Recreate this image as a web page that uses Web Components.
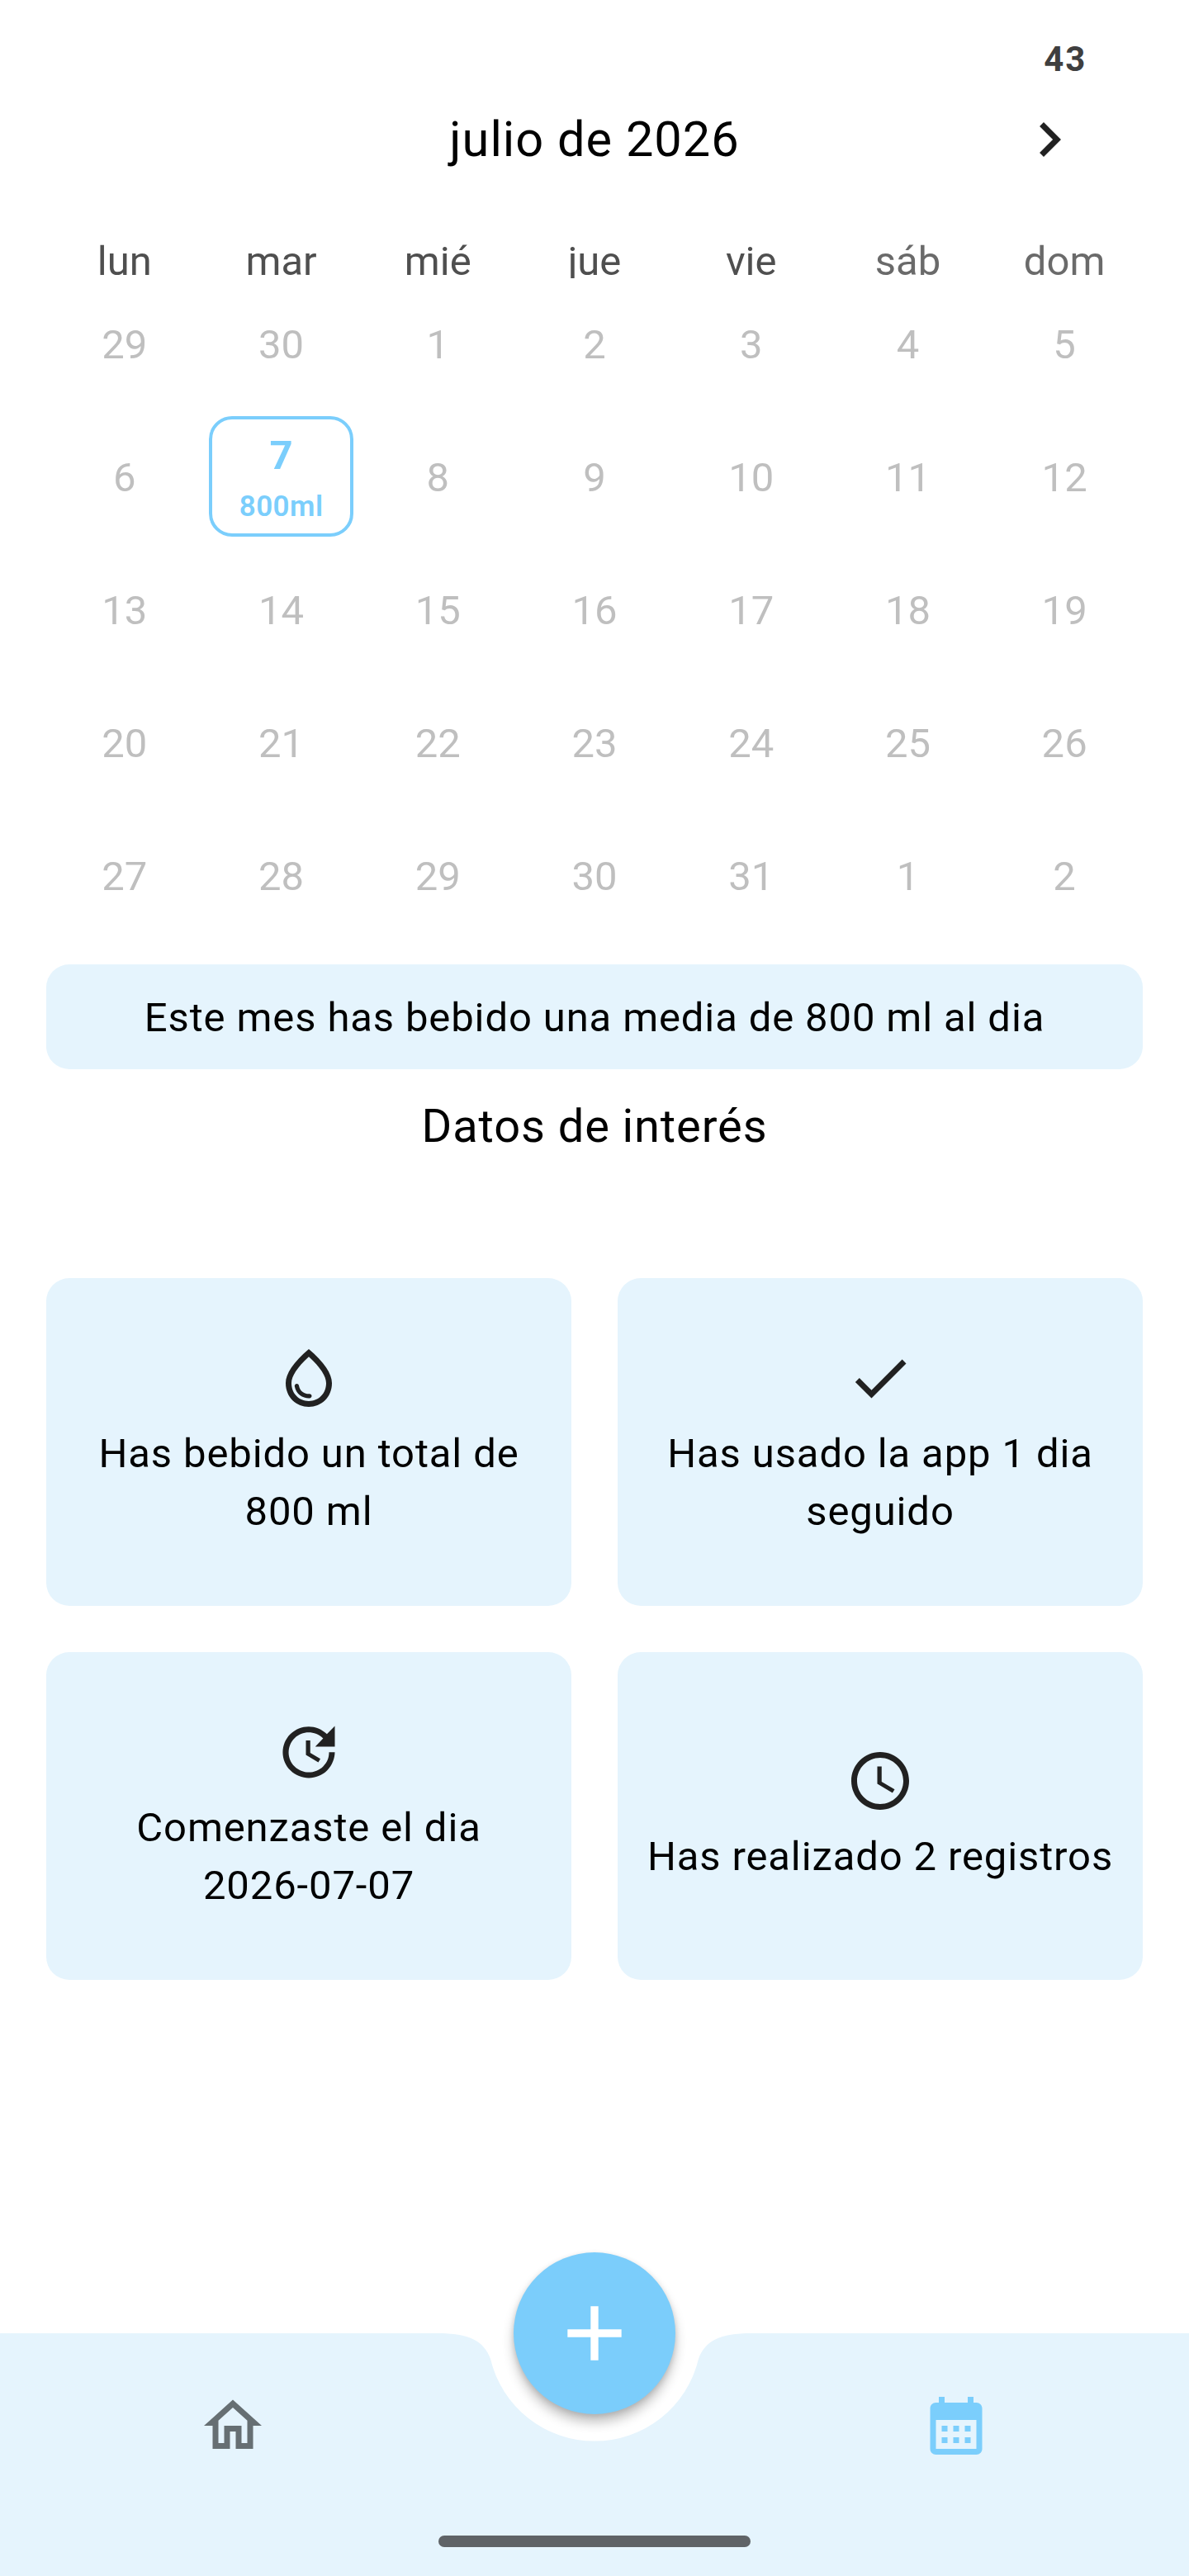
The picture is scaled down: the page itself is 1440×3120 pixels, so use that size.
<!DOCTYPE html>
<html lang="es"><head><meta charset="utf-8"><title>Calendario</title>
<style>
html,body{margin:0;padding:0;background:#fff}
body{font-family:Roboto,"Noto Sans",sans-serif;color:#000}
</style></head><body>
<stats-screen></stats-screen>
<script>
const P={
 chev:'M10 6L8.59 7.41 13.17 12l-4.58 4.59L10 18l6-6z',
 drop:'M12,2c-5.33,4.55-8,8.48-8,11.8c0,4.98,3.8,8.2,8,8.2s8-3.22,8-8.2C20,10.48,17.33,6.55,12,2z M12,20c-3.35,0-6-2.57-6-6.2 c0-2.34,1.95-5.44,6-9.14c4.05,3.7,6,6.79,6,9.14C18,17.43,15.35,20,12,20z M7.83,14c0.37,0,0.67,0.26,0.74,0.62 c0.41,2.22,2.28,2.98,3.64,2.87c0.43-0.02,0.79,0.32,0.79,0.75c0,0.4-0.32,0.73-0.72,0.75c-2.13,0.13-4.62-1.09-5.19-4.12 C7.01,14.42,7.37,14,7.83,14z',
 check:'M9 16.2L4.8 12l-1.4 1.4L9 19 21 7l-1.4-1.4L9 16.2z',
 update:'M21 10.12h-6.78l2.74-2.82c-2.73-2.7-7.15-2.8-9.88-.1-2.73 2.71-2.73 7.08 0 9.79s7.15 2.71 9.88 0C18.32 15.65 19 14.08 19 12.1h2c0 1.98-.88 4.55-2.64 6.29-3.51 3.48-9.21 3.48-12.72 0-3.5-3.47-3.53-9.11-.02-12.58s9.14-3.47 12.65 0L21 3v7.12zM12.5 8v4.25l3.5 2.08-.72 1.21L11 13V8h1.5z',
 clock:'M11.99 2C6.47 2 2 6.48 2 12s4.47 10 9.99 10C17.52 22 22 17.52 22 12S17.52 2 11.99 2zM12 20c-4.42 0-8-3.58-8-8s3.58-8 8-8 8 3.58 8 8-3.58 8-8 8zm.5-13H11v6l5.25 3.15.75-1.23-4.5-2.67z',
 home:'M12 5.69l5 4.5V18h-2v-6H9v6H7v-7.81l5-4.5M12 3L2 12h3v8h6v-6h2v6h6v-8h3L12 3z',
 cal:'M19 4h-1V2h-2v2H8V2H6v2H5c-1.11 0-1.99.9-1.99 2L3 20c0 1.1.89 2 2 2h14c1.1 0 2-.9 2-2V6c0-1.1-.9-2-2-2zm0 16H5V10h14v10zM9 14H7v-2h2v2zm4 0h-2v-2h2v2zm4 0h-2v-2h2v2zm-8 4H7v-2h2v2zm4 0h-2v-2h2v2zm4 0h-2v-2h2v2z',
 add:'M19 13h-6v6h-2v-6H5v-2h6V5h2v6h6v2z'
};
class MatIcon extends HTMLElement{
 connectedCallback(){
  const s=this.getAttribute('size')||84,c=this.getAttribute('color')||'#212121';
  this.attachShadow({mode:'open'}).innerHTML=`<style>:host{display:block;width:${s}px;height:${s}px;flex:none}svg{display:block;width:100%;height:100%}</style><svg viewBox="0 0 24 24"><path fill="${c}" d="${P[this.getAttribute('name')]}"/></svg>`;
 }
}
customElements.define('mat-icon',MatIcon);

class CalHeader extends HTMLElement{
 connectedCallback(){
  this.attachShadow({mode:'open'}).innerHTML=`<style>
  :host{display:block}
  .count{height:127px;box-sizing:border-box;padding:48px 124px 0 0;text-align:right;font:700 42px/48px Roboto,sans-serif;letter-spacing:1.75px;color:#3f3f3f}
  .row{display:grid;grid-template-columns:1fr auto 1fr;align-items:center;height:84px;padding-right:127px}
  .t{grid-column:2;font:400 59.5px/84px Roboto,sans-serif;letter-spacing:1px;color:#000;margin-left:127px}
  mat-icon{grid-column:3;justify-self:end}
  </style><div class="count">43</div><div class="row"><div class="t">julio de 2026</div><mat-icon name="chev"></mat-icon></div>`;
 }
}
customElements.define('cal-header',CalHeader);

class CalGrid extends HTMLElement{
 connectedCallback(){
  const wd=['lun','mar','mié','jue','vie','sáb','dom'];
  const days=[29,30,1,2,3,4,5,6,7,8,9,10,11,12,13,14,15,16,17,18,19,20,21,22,23,24,25,26,27,28,29,30,31,1,2];
  this.attachShadow({mode:'open'}).innerHTML=`<style>
  :host{display:block;padding:0 56px}
  .wd{display:grid;grid-template-columns:repeat(7,1fr);height:126px;overflow:hidden;box-sizing:border-box;padding-top:86px}
  .wd div{text-align:center;font:400 49px/40px Roboto,sans-serif;color:#4f4f4f}
  .wd div.we{color:#6a6a6a}
  .g{display:grid;grid-template-columns:repeat(7,1fr);grid-auto-rows:161px}
  .c{display:flex;align-items:center;justify-content:center;font:400 49px/1 Roboto,sans-serif;color:#bfbfbf}
  .sel{width:175px;height:146px;box-sizing:border-box;border:4px solid #7bcefc;border-radius:28px;display:flex;flex-direction:column;align-items:center;justify-content:center;color:#7bcefc;margin-top:-3px}
  .sel b{font:700 49px/70px Roboto,sans-serif;padding-top:1px}
  .sel span{font:600 35px/50px Roboto,sans-serif;letter-spacing:.45px;margin-top:2px}
  </style><div class="wd">${wd.map((d,i)=>`<div class="${i>4?'we':''}">${d}</div>`).join('')}</div>
  <div class="g">${days.map(d=>d===7?`<div class="c"><div class="sel"><b>7</b><span>800ml</span></div></div>`:`<div class="c">${d}</div>`).join('')}</div>`;
 }
}
customElements.define('cal-grid',CalGrid);

class InfoBanner extends HTMLElement{
 connectedCallback(){
  this.attachShadow({mode:'open'}).innerHTML=`<style>
  :host{display:flex;margin:26px 56px 0;height:127px;box-sizing:border-box;padding-top:2px;border-radius:28px;background:#e5f4fd;align-items:center;justify-content:center;font:400 49px/70px Roboto,sans-serif;letter-spacing:.875px;color:#000}
  </style><slot></slot>`;
 }
}
customElements.define('info-banner',InfoBanner);

class SectionTitle extends HTMLElement{
 connectedCallback(){
  this.attachShadow({mode:'open'}).innerHTML=`<style>
  :host{display:block;text-align:center;font:400 56px/84px Roboto,sans-serif;letter-spacing:.9px;color:#000;margin-top:27px}
  </style><slot></slot>`;
 }
}
customElements.define('section-title',SectionTitle);

class FactCard extends HTMLElement{
 connectedCallback(){
  this.attachShadow({mode:'open'}).innerHTML=`<style>
  :host{display:flex;flex-direction:column;align-items:center;justify-content:center;gap:15px;height:397px;box-sizing:border-box;padding:0 28px;border-radius:28px;background:#e5f4fd;text-align:center;font:400 49px/70px Roboto,sans-serif;letter-spacing:.875px;color:#000}
  </style><mat-icon name="${this.getAttribute('icon')}"></mat-icon><div class="t"><slot></slot></div>`;
 }
}
customElements.define('fact-card',FactCard);

class FactGrid extends HTMLElement{
 connectedCallback(){
  this.attachShadow({mode:'open'}).innerHTML=`<style>
  :host{display:grid;grid-template-columns:1fr 1fr;gap:56px;padding:0 56px;margin-top:142px}
  </style><slot></slot>`;
 }
}
customElements.define('fact-grid',FactGrid);

class BottomBar extends HTMLElement{
 connectedCallback(){
  this.attachShadow({mode:'open'}).innerHTML=`<style>
  :host{display:block;position:relative;height:294px;margin-top:auto;flex:none}
  svg.bg{position:absolute;left:0;top:0;width:1440px;height:294px;display:block}
  .items{position:relative;display:grid;grid-template-columns:564px 312px 564px;height:224px;align-items:center;justify-items:center}
  .items mat-icon:first-child{grid-column:1}
  .items mat-icon:last-child{grid-column:3}
  .fab{position:absolute;left:622px;top:-98px;width:196px;height:196px;border-radius:50%;background:#7bcdfb;box-shadow:0 10px 14px rgba(0,0,0,.24),0 2px 6px rgba(0,0,0,.12);display:flex;align-items:center;justify-content:center}
  .ind{position:absolute;left:531px;top:245px;width:378px;height:14px;border-radius:7px;background:#5f6367}
  </style>
  <svg class="bg" viewBox="0 0 1440 294"><path fill="#e5f4fd" d="M0 0H530C568 0 586 9 594 31A129.500 129.500 0 0 0 846 31C854 9 872 0 910 0H1440V294H0Z"/></svg>
  <div class="items"><mat-icon name="home" color="#666f73"></mat-icon><mat-icon name="cal" color="#7bcefc"></mat-icon></div>
  <div class="fab"><mat-icon name="add" size="112" color="#fff"></mat-icon></div>
  <div class="ind"></div>`;
 }
}
customElements.define('bottom-bar',BottomBar);

class StatsScreen extends HTMLElement{
 connectedCallback(){
  this.attachShadow({mode:'open'}).innerHTML=`<style>
  :host{display:flex;flex-direction:column;width:1440px;height:3120px;overflow:hidden;background:#fff}
  </style>
  <cal-header></cal-header>
  <cal-grid></cal-grid>
  <info-banner>Este mes has bebido una media de 800 ml al dia</info-banner>
  <section-title>Datos de interés</section-title>
  <fact-grid>
   <fact-card icon="drop">Has bebido un total de 800 ml</fact-card>
   <fact-card icon="check">Has usado la app 1 dia seguido</fact-card>
   <fact-card icon="update">Comenzaste el dia <span style="white-space:nowrap">2026-07-07</span></fact-card>
   <fact-card icon="clock">Has realizado 2 registros</fact-card>
  </fact-grid>
  <bottom-bar></bottom-bar>`;
 }
}
customElements.define('stats-screen',StatsScreen);
</script>
</body></html>
